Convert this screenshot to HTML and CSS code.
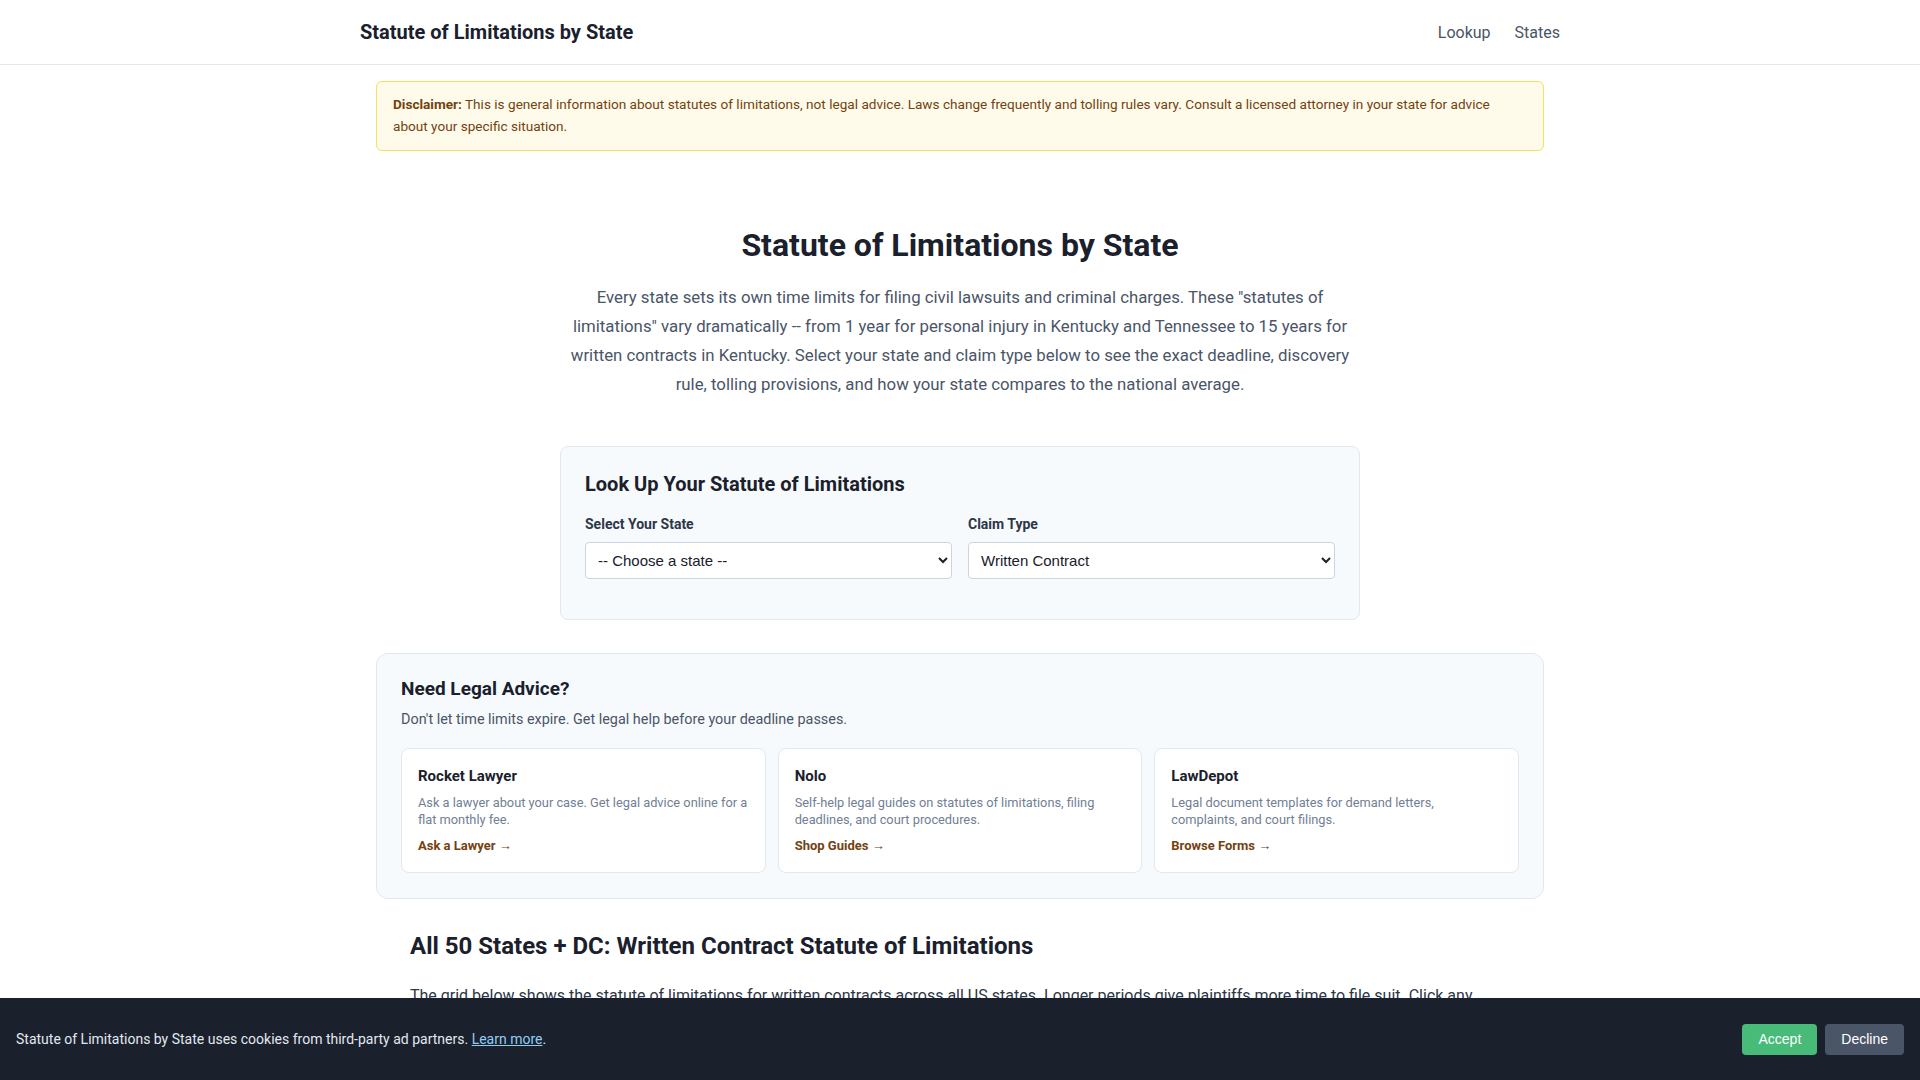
FILE: index.html
```html
<!DOCTYPE html>
<html lang="en">
<head>
<meta charset="utf-8">
<title>Statute of Limitations by State</title>
<link rel="stylesheet" href="styles.css">
</head>
<body>
<header class="site-header">
  <div class="header-inner">
    <a class="brand" href="#">Statute of Limitations by State</a>
    <nav class="nav">
      <a href="#lookup">Lookup</a>
      <a href="#states">States</a>
    </nav>
  </div>
</header>
<main class="container">
  <div class="disclaimer"><strong>Disclaimer:</strong> This is general information about statutes of limitations, not legal advice. Laws change frequently and tolling rules vary. Consult a licensed attorney in your state for advice about your specific situation.</div>

  <section class="hero">
    <h1>Statute of Limitations by State</h1>
    <p>Every state sets its own time limits for filing civil lawsuits and criminal charges. These "statutes of limitations" vary dramatically -- from 1 year for personal injury in Kentucky and Tennessee to 15 years for written contracts in Kentucky. Select your state and claim type below to see the exact deadline, discovery rule, tolling provisions, and how your state compares to the national average.</p>
  </section>

  <section class="lookup" id="lookup">
    <h2>Look Up Your Statute of Limitations</h2>
    <div class="lookup-grid">
      <div class="field">
        <label for="state">Select Your State</label>
        <select id="state"><option>-- Choose a state --</option></select>
      </div>
      <div class="field">
        <label for="claim">Claim Type</label>
        <select id="claim"><option>Written Contract</option></select>
      </div>
    </div>
  </section>

  <section class="advice">
    <h2>Need Legal Advice?</h2>
    <p class="advice-sub">Don't let time limits expire. Get legal help before your deadline passes.</p>
    <div class="advice-grid">
      <div class="advice-card">
        <h3>Rocket Lawyer</h3>
        <p>Ask a lawyer about your case. Get legal advice online for a flat monthly fee.</p>
        <a href="#">Ask a Lawyer →</a>
      </div>
      <div class="advice-card">
        <h3>Nolo</h3>
        <p>Self-help legal guides on statutes of limitations, filing deadlines, and court procedures.</p>
        <a href="#">Shop Guides →</a>
      </div>
      <div class="advice-card">
        <h3>LawDepot</h3>
        <p>Legal document templates for demand letters, complaints, and court filings.</p>
        <a href="#">Browse Forms →</a>
      </div>
    </div>
  </section>

  <section class="states" id="states">
    <h2>All 50 States + DC: Written Contract Statute of Limitations</h2>
    <p>The grid below shows the statute of limitations for written contracts across all US states. Longer periods give plaintiffs more time to file suit. Click any state to see the full details for that state and claim type.</p>
  </section>
</main>

<div class="cookie-banner">
  <p>Statute of Limitations by State uses cookies from third-party ad partners. <a href="#">Learn more</a>.</p>
  <div class="cookie-actions">
    <button class="btn btn-accept">Accept</button>
    <button class="btn btn-decline">Decline</button>
  </div>
</div>
</body>
</html>
```

FILE: styles.css
```css
* { box-sizing: border-box; }
html, body { margin: 0; padding: 0; }
body {
  font-family: Roboto, "Liberation Sans", Arial, sans-serif;
  color: #1a202c;
  background: #ffffff;
}
a { text-decoration: none; }

.site-header {
  height: 65px;
  border-bottom: 1px solid #e2e8f0;
  background: #fff;
}
.header-inner {
  max-width: 1200px;
  margin: 0 auto;
  height: 64px;
  display: flex;
  align-items: center;
  justify-content: space-between;
}
.brand {
  font-size: 20px;
  font-weight: 700;
  color: #1a202c;
}
.nav { display: flex; gap: 24px; }
.nav a { font-size: 16px; color: #4a5568; }

.container {
  max-width: 1200px;
  margin: 0 auto;
  padding: 16px 16px 120px;
}

.disclaimer {
  background: #fffbeb;
  border: 1px solid #f6e05e;
  border-radius: 6px;
  padding: 11px 16px 13px;
  font-size: 13.6px;
  line-height: 22px;
  color: #744210;
}
.disclaimer strong { font-weight: 700; }

.hero {
  text-align: center;
  padding-top: 74px;
}
.hero h1 {
  margin: 0 0 18px;
  font-size: 32px;
  line-height: 40px;
  font-weight: 700;
  color: #1a202c;
}
.hero p {
  max-width: 790px;
  margin: 0 auto;
  font-size: 16.8px;
  line-height: 29px;
  color: #4a5568;
}

.lookup {
  max-width: 800px;
  margin: 47px auto 0;
  background: #f7fafc;
  border: 1px solid #e2e8f0;
  border-radius: 8px;
  padding: 24px 24px 40px;
}
.lookup h2 {
  margin: 0 0 17px;
  font-size: 20px;
  line-height: 26px;
  font-weight: 700;
}
.lookup-grid {
  display: grid;
  grid-template-columns: 1fr 1fr;
  gap: 16px;
}
.field label {
  display: block;
  font-size: 14px;
  line-height: 20px;
  font-weight: 700;
  color: #2d3748;
  margin-bottom: 8px;
}
.field select {
  width: 100%;
  height: 37px;
  padding: 0 8px;
  border: 1px solid #cbd5e0;
  border-radius: 4px;
  background: #fff;
  font-family: "Liberation Sans", Arial, sans-serif;
  font-size: 15px;
  color: #1a202c;
}

.advice {
  margin-top: 33px;
  background: #f7fafc;
  border: 1px solid #e2e8f0;
  border-radius: 12px;
  padding: 22px 24px 25px;
}
.advice h2 {
  margin: 0 0 8px;
  font-size: 19px;
  line-height: 26px;
  font-weight: 700;
}
.advice-sub {
  margin: 0 0 18px;
  font-size: 14.4px;
  line-height: 20px;
  color: #4a5568;
}
.advice-grid {
  display: grid;
  grid-template-columns: repeat(3, 1fr);
  gap: 12px;
}
.advice-card {
  background: #fff;
  border: 1px solid #e2e8f0;
  border-radius: 8px;
  padding: 17px 16px 18px;
}
.advice-card h3 {
  margin: 0 0 8px;
  font-size: 15px;
  line-height: 20px;
  font-weight: 700;
  color: #1a202c;
}
.advice-card p {
  margin: 0 0 10px;
  font-size: 12.8px;
  line-height: 17px;
  color: #718096;
}
.advice-card a {
  display: block;
  width: fit-content;
  font-size: 13px;
  line-height: 16px;
  font-weight: 700;
  color: #744210;
}

.states {
  max-width: 1100px;
  margin: 31px auto 0;
  padding: 0;
}
.states h2 {
  margin: 0 0 20px;
  font-size: 24px;
  line-height: 32px;
  font-weight: 700;
}
.states p {
  margin: 0;
  font-size: 16px;
  line-height: 27px;
  color: #2d3748;
}

.cookie-banner {
  position: fixed;
  left: 0;
  right: 0;
  bottom: 0;
  height: 82px;
  background: #1a202c;
  display: flex;
  align-items: center;
  justify-content: space-between;
  padding: 0 16px;
  z-index: 10;
}
.cookie-banner p {
  margin: 0;
  font-size: 14px;
  color: #e2e8f0;
}
.cookie-banner a {
  color: #90cdf4;
  text-decoration: underline;
}
.cookie-actions { display: flex; gap: 8px; }
.btn {
  border: 0;
  border-radius: 4px;
  height: 31px;
  padding: 0 16px;
  font-family: "Liberation Sans", Arial, sans-serif;
  font-size: 14px;
  color: #fff;
  cursor: pointer;
}
.btn-accept { background: #48bb78; }
.btn-decline { background: #4a5568; }
```
